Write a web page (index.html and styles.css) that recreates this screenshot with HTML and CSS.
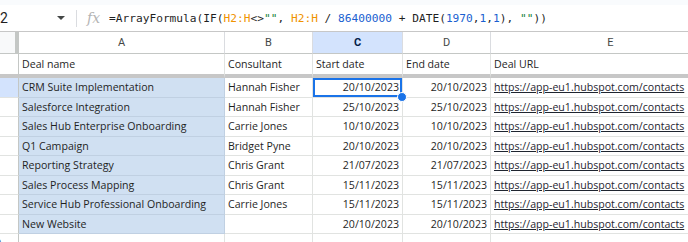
FILE: index.html
```html
<!DOCTYPE html>
<html lang="en">
<head>
  <meta charset="UTF-8" />
  <title>Deals sheet</title>
  <link rel="stylesheet" href="styles.css">
</head>
<body>

<div class="topstrip"></div>

<div class="formulabar">
  <div class="namebox">
    <span class="namebox-text">C2</span>
    <span class="caret"></span>
  </div>
  <div class="sep"></div>
  <span class="fx">fx</span>
  <div class="formula">=ArrayFormula(IF(<span class="ref">H2:H</span>&lt;&gt;<span class="str">""</span>, <span class="ref">H2:H</span> / <span class="num">86400000</span> + DATE(<span class="num">1970</span>,<span class="num">1</span>,<span class="num">1</span>), <span class="str">""</span>))</div>
</div>

<div class="viewport">
  <div class="sheet">
    <!-- column headers -->
    <div class="corner"></div>
    <div class="colhead">A</div>
    <div class="colhead">B</div>
    <div class="colhead active">C</div>
    <div class="colhead">D</div>
    <div class="colhead">E</div>

    <!-- row 1, frozen -->
    <div class="rowhead frozen">1</div>
    <div class="cell frozen">Deal name</div>
    <div class="cell frozen">Consultant</div>
    <div class="cell frozen">Start date</div>
    <div class="cell frozen">End date</div>
    <div class="cell frozen">Deal URL</div>

    <div class="rowhead active">2</div>
    <div class="cell deal">CRM Suite Implementation</div>
    <div class="cell">Hannah Fisher</div>
    <div class="cell date selected">20/10/2023<span class="handle"></span></div>
    <div class="cell date">20/10/2023</div>
    <div class="cell link">https://app-eu1.hubspot.com/contacts</div>

    <div class="rowhead">3</div>
    <div class="cell deal">Salesforce Integration</div>
    <div class="cell">Hannah Fisher</div>
    <div class="cell date">25/10/2023</div>
    <div class="cell date">25/10/2023</div>
    <div class="cell link">https://app-eu1.hubspot.com/contacts</div>

    <div class="rowhead">4</div>
    <div class="cell deal">Sales Hub Enterprise Onboarding</div>
    <div class="cell">Carrie Jones</div>
    <div class="cell date">10/10/2023</div>
    <div class="cell date">10/10/2023</div>
    <div class="cell link">https://app-eu1.hubspot.com/contacts</div>

    <div class="rowhead">5</div>
    <div class="cell deal">Q1 Campaign</div>
    <div class="cell">Bridget Pyne</div>
    <div class="cell date">20/10/2023</div>
    <div class="cell date">20/10/2023</div>
    <div class="cell link">https://app-eu1.hubspot.com/contacts</div>

    <div class="rowhead">6</div>
    <div class="cell deal">Reporting Strategy</div>
    <div class="cell">Chris Grant</div>
    <div class="cell date">21/07/2023</div>
    <div class="cell date">21/07/2023</div>
    <div class="cell link">https://app-eu1.hubspot.com/contacts</div>

    <div class="rowhead">7</div>
    <div class="cell deal">Sales Process Mapping</div>
    <div class="cell">Chris Grant</div>
    <div class="cell date">15/11/2023</div>
    <div class="cell date">15/11/2023</div>
    <div class="cell link">https://app-eu1.hubspot.com/contacts</div>

    <div class="rowhead">8</div>
    <div class="cell deal">Service Hub Professional Onboarding</div>
    <div class="cell">Carrie Jones</div>
    <div class="cell date">15/11/2023</div>
    <div class="cell date">15/11/2023</div>
    <div class="cell link">https://app-eu1.hubspot.com/contacts</div>

    <div class="rowhead">9</div>
    <div class="cell deal">New Website</div>
    <div class="cell"></div>
    <div class="cell date">20/10/2023</div>
    <div class="cell date">20/10/2023</div>
    <div class="cell link">https://app-eu1.hubspot.com/contacts</div>

    <div class="rowhead">10</div>
    <div class="cell"></div>
    <div class="cell"></div>
    <div class="cell"></div>
    <div class="cell"></div>
    <div class="cell"></div>
  </div>
</div>

</body>
</html>
```

FILE: styles.css
```css
body {
  margin: 0;
  width: 688px;
  height: 242px;
  overflow: hidden;
  background: #fff;
  font-family: "Open Sans", Arial, sans-serif;
  color: #1f1f1f;
}

.topstrip {
  height: 5px;
  background: #f9fbfd;
}

.formulabar {
  height: 26px;
  display: flex;
  align-items: center;
  border-bottom: 1px solid #c7c7c7;
  overflow: hidden;
}

.namebox {
  width: 83px;
  flex-shrink: 0;
  margin-left: -9px;
  display: flex;
  align-items: center;
  font-family: Roboto, Arial, sans-serif;
  font-size: 14px;
  color: #1f1f1f;
}

.caret {
  margin-left: auto;
  margin-right: 9px;
  width: 0;
  height: 0;
  border-left: 4px solid transparent;
  border-right: 4px solid transparent;
  border-top: 4px solid #444746;
}

.sep {
  width: 1px;
  height: 17px;
  background: #dadce0;
  margin-left: 2px;
}

.fx {
  font-family: "DejaVu Serif", "Liberation Serif", serif;
  font-style: italic;
  font-size: 14px;
  color: #b4b4b4;
  margin-left: 10px;
  width: 22px;
  flex-shrink: 0;
}

.formula {
  font-family: "DejaVu Sans Mono", "Liberation Mono", monospace;
  font-size: 11.2px;
  color: #1f1f1f;
  white-space: nowrap;
  padding-top: 1px;
}

.ref { color: #f09300; }
.str { color: #188038; }
.num { color: #1a5fd0; }

.viewport {
  overflow: hidden;
}

.sheet {
  margin-left: -28px;
  display: grid;
  grid-template-columns: 47px 206px 88px 90px 88px 240px;
  grid-template-rows: 22px 24px repeat(9, 19.5px);
  font-size: 10.6px;
}

.corner {
  background: #f8f9fa;
  border-right: 4px solid #c4c7c5;
  border-bottom: 1px solid #c4c7c5;
}

.colhead {
  display: flex;
  align-items: center;
  justify-content: center;
  font-family: Roboto, Arial, sans-serif;
  font-size: 11px;
  color: #444746;
  border-right: 1px solid #dadce0;
  border-bottom: 1px solid #c4c7c5;
}

.colhead.active {
  background: #d3e3fd;
  color: #041e49;
  font-weight: bold;
}

.rowhead {
  display: flex;
  align-items: center;
  justify-content: center;
  font-family: Roboto, Arial, sans-serif;
  font-size: 11px;
  color: #444746;
  border-right: 1px solid #c4c7c5;
  border-bottom: 1px solid #e1e3e1;
}

.rowhead.active {
  background: #d3e3fd;
}

.cell {
  position: relative;
  display: flex;
  align-items: center;
  padding: 0 3px;
  white-space: nowrap;
  overflow: hidden;
  border-right: 1px solid #e1e3e1;
  border-bottom: 1px solid #e1e3e1;
}

.frozen {
  border-bottom: 4px solid #c7c7c7;
}

.deal {
  background: #d0e0f2;
  border-right-color: #c0d0e2;
  border-bottom-color: #c0d0e2;
}

.date {
  justify-content: flex-end;
  padding-right: 3px;
}

.link {
  text-decoration: underline;
  color: #1f2530;
}

.selected {
  overflow: visible;
  box-shadow: inset 0 0 0 2px #1a73e8;
}

.handle {
  position: absolute;
  right: -5px;
  bottom: -5px;
  width: 8px;
  height: 8px;
  border-radius: 50%;
  background: #1a73e8;
  border: 1px solid #fff;
  z-index: 2;
}
```
